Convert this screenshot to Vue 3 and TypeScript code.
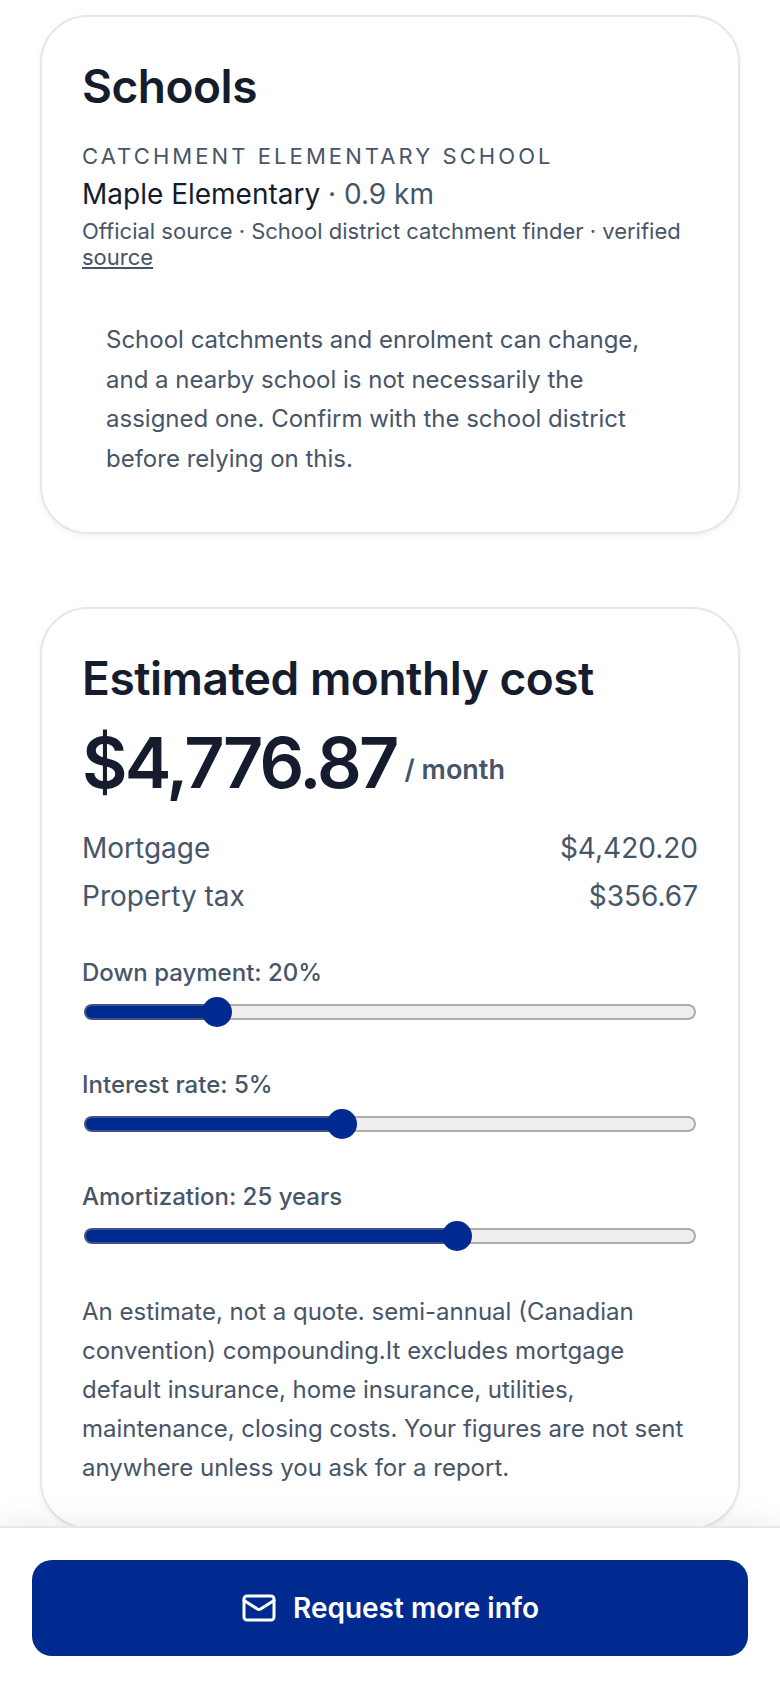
<template>
  <div class="page">
    <main class="scroller">
      <section class="card schools">
        <h2>Schools</h2>
        <p class="eyebrow">Catchment elementary school</p>
        <p class="school"><strong>Maple Elementary</strong> · 0.9 km</p>
        <p class="source">Official source · School district catchment finder · verified <a href="#">source</a></p>
        <p class="note">
          School catchments and enrolment can change, and a nearby school is not necessarily the
          assigned one. Confirm with the school district before relying on this.
        </p>
      </section>

      <section class="card cost">
        <h2>Estimated monthly cost</h2>
        <div class="total">
          <span class="amount">$4,776.87</span>
          <span class="per">/ month</span>
        </div>
        <dl class="lines">
          <div v-for="line in lines" :key="line.label" class="line">
            <dt>{{ line.label }}</dt>
            <dd>{{ line.value }}</dd>
          </div>
        </dl>
        <label v-for="slider in sliders" :key="slider.label" class="slider">
          <span>{{ slider.label }}</span>
          <input
            v-model.number="slider.value"
            type="range"
            :min="slider.min"
            :max="slider.max"
            :style="{ '--fill': fill(slider) }"
          />
        </label>
        <p class="disclaimer">
          An estimate, not a quote. semi-annual (Canadian convention) compounding.It excludes
          mortgage default insurance, home insurance, utilities, maintenance, closing costs. Your
          figures are not sent anywhere unless you ask for a report.
        </p>
      </section>
    </main>

    <footer class="action-bar">
      <button type="button" class="cta">
        <svg viewBox="0 0 24 24" width="36" height="36" fill="none" stroke="currentColor" stroke-width="2" stroke-linecap="round" stroke-linejoin="round">
          <rect x="2" y="4" width="20" height="16" rx="2" />
          <path d="m22 7-8.97 5.7a1.94 1.94 0 0 1-2.06 0L2 7" />
        </svg>
        Request more info
      </button>
    </footer>
  </div>
</template>

<script setup lang="ts">
import { reactive } from "vue";

type Slider = {
  label: string;
  value: number;
  min: number;
  max: number;
};

const lines = [
  { label: "Mortgage", value: "$4,420.20" },
  { label: "Property tax", value: "$356.67" },
];

const sliders = reactive<Slider[]>([
  { label: "Down payment: 20%", value: 20, min: 0, max: 100 },
  { label: "Interest rate: 5%", value: 5, min: 0, max: 12 },
  { label: "Amortization: 25 years", value: 25, min: 1, max: 40 },
]);

// thumb centre stays inside the track, so offset by half the thumb width
function fill(slider: Slider) {
  const ratio = (slider.value - slider.min) / (slider.max - slider.min);
  return `calc(15px + (100% - 30px) * ${ratio})`;
}
</script>

<style scoped>
.page {
  height: 1688px;
  display: flex;
  flex-direction: column;
  overflow: hidden;
  background: #fff;
  color: #475569;
  font-family: Inter, "Liberation Sans", sans-serif;
}

.scroller {
  flex: 1;
  min-height: 0;
  overflow: hidden;
  padding: 15px 40px 0;
  display: flex;
  flex-direction: column;
  gap: 73px;
}

.card {
  flex: none;
  box-sizing: border-box;
  padding: 40px;
  border: 2px solid #e5e7eb;
  border-radius: 48px;
  background: #fff;
  box-shadow: 0 2px 6px rgba(15, 23, 42, 0.06);
}

h2 {
  margin: 0;
  color: #141c2e;
  font-family: Inter, sans-serif;
  font-size: 46px;
  font-weight: 600;
  letter-spacing: -0.01em;
  line-height: 58px;
}

.eyebrow {
  margin: 26px 0 0;
  font-size: 22px;
  letter-spacing: 0.14em;
  line-height: 30px;
  text-transform: uppercase;
}

.school {
  margin: 3px 0 0;
  font-size: 28px;
  line-height: 40px;
}

.school strong {
  color: #141c2e;
  font-weight: 400;
}

.source {
  margin: 4px 0 0;
  font-size: 22px;
  line-height: 26px;
}

.source a {
  color: inherit;
}

.note {
  margin: 26px 0 0;
  padding: 24px 24px 14px;
  font-size: 24px;
  line-height: 39.5px;
}

.total {
  display: flex;
  align-items: center;
  gap: 8px;
  margin-top: 11px;
}

.amount {
  color: #141c2e;
  font-family: Inter, sans-serif;
  font-size: 70px;
  font-weight: 600;
  letter-spacing: -0.04em;
  line-height: 90px;
}

.per {
  margin-top: 12px;
  font-size: 27px;
  font-weight: 600;
}

.lines {
  margin: 16px 0 36px;
}

.line {
  display: flex;
  justify-content: space-between;
  font-size: 28px;
  line-height: 48px;
}

.line dd {
  margin: 0;
}

.slider {
  display: block;
  font-size: 24px;
  font-weight: 500;
  line-height: 34px;
}

.slider + .slider {
  margin-top: 41px;
}

.slider span {
  display: block;
}

.slider input {
  display: block;
  width: calc(100% - 4px);
  height: 30px;
  margin: 7px 2px 0;
  background: transparent;
  appearance: none;
  -webkit-appearance: none;
}

.slider input::-webkit-slider-runnable-track {
  box-sizing: border-box;
  height: 16px;
  border: 2px solid rgba(120, 120, 120, 0.55);
  border-radius: 8px;
  background: linear-gradient(#002a8f, #002a8f) 0 0 / var(--fill) 100% no-repeat #efefef;
  background-origin: border-box;
  background-clip: border-box;
}

.slider input::-webkit-slider-thumb {
  width: 30px;
  height: 30px;
  margin-top: -9px;
  border-radius: 50%;
  background: #002a8f;
  appearance: none;
  -webkit-appearance: none;
}

.disclaimer {
  margin: 41px 0 0;
  font-size: 24px;
  line-height: 39px;
}

.action-bar {
  position: relative;
  flex: none;
  box-sizing: border-box;
  height: 162px;
  padding: 32px 32px 0;
  border-top: 2px solid #e5e7eb;
  background: #fff;
  box-shadow: 0 -8px 24px rgba(15, 23, 42, 0.06);
}

.cta {
  width: 100%;
  height: 96px;
  display: flex;
  align-items: center;
  justify-content: center;
  gap: 16px;
  border: 0;
  border-radius: 20px;
  background: #002a8f;
  color: #fff;
  font: 600 28px Inter, "Liberation Sans", sans-serif;
}
</style>

<style>
html,
body {
  margin: 0;
  background: #fff;
}
</style>
